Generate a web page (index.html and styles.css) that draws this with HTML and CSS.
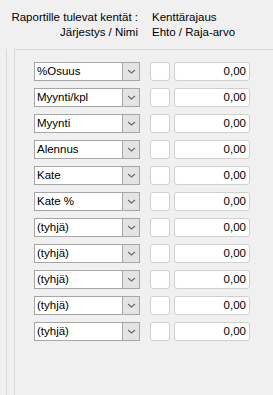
FILE: index.html
```html
<!DOCTYPE html>
<html>
<head>
<meta charset="utf-8">
<link rel="stylesheet" href="styles.css">
</head>
<body>
<div class="header">
  <div class="hleft">
    <div>Raportille tulevat kentät :</div>
    <div>Järjestys / Nimi</div>
  </div>
  <div class="hright">
    <div>Kenttärajaus</div>
    <div>Ehto / Raja-arvo</div>
  </div>
</div>
<div class="main">
  <div class="strip"></div>
  <div class="panel">
    <div class="row"><div class="combo"><span class="ctext">%Osuus</span><span class="btn"><svg width="9" height="5" viewBox="0 0 9 5"><path d="M1 1 L4.5 4 L8 1" fill="none" stroke="#6a6a6a" stroke-width="1.2"/></svg></span></div><div class="cond"></div><div class="val">0,00</div></div>
    <div class="row"><div class="combo"><span class="ctext">Myynti/kpl</span><span class="btn"><svg width="9" height="5" viewBox="0 0 9 5"><path d="M1 1 L4.5 4 L8 1" fill="none" stroke="#6a6a6a" stroke-width="1.2"/></svg></span></div><div class="cond"></div><div class="val">0,00</div></div>
    <div class="row"><div class="combo"><span class="ctext">Myynti</span><span class="btn"><svg width="9" height="5" viewBox="0 0 9 5"><path d="M1 1 L4.5 4 L8 1" fill="none" stroke="#6a6a6a" stroke-width="1.2"/></svg></span></div><div class="cond"></div><div class="val">0,00</div></div>
    <div class="row"><div class="combo"><span class="ctext">Alennus</span><span class="btn"><svg width="9" height="5" viewBox="0 0 9 5"><path d="M1 1 L4.5 4 L8 1" fill="none" stroke="#6a6a6a" stroke-width="1.2"/></svg></span></div><div class="cond"></div><div class="val">0,00</div></div>
    <div class="row"><div class="combo"><span class="ctext">Kate</span><span class="btn"><svg width="9" height="5" viewBox="0 0 9 5"><path d="M1 1 L4.5 4 L8 1" fill="none" stroke="#6a6a6a" stroke-width="1.2"/></svg></span></div><div class="cond"></div><div class="val">0,00</div></div>
    <div class="row"><div class="combo"><span class="ctext">Kate %</span><span class="btn"><svg width="9" height="5" viewBox="0 0 9 5"><path d="M1 1 L4.5 4 L8 1" fill="none" stroke="#6a6a6a" stroke-width="1.2"/></svg></span></div><div class="cond"></div><div class="val">0,00</div></div>
    <div class="row"><div class="combo"><span class="ctext">(tyhjä)</span><span class="btn"><svg width="9" height="5" viewBox="0 0 9 5"><path d="M1 1 L4.5 4 L8 1" fill="none" stroke="#6a6a6a" stroke-width="1.2"/></svg></span></div><div class="cond"></div><div class="val">0,00</div></div>
    <div class="row"><div class="combo"><span class="ctext">(tyhjä)</span><span class="btn"><svg width="9" height="5" viewBox="0 0 9 5"><path d="M1 1 L4.5 4 L8 1" fill="none" stroke="#6a6a6a" stroke-width="1.2"/></svg></span></div><div class="cond"></div><div class="val">0,00</div></div>
    <div class="row"><div class="combo"><span class="ctext">(tyhjä)</span><span class="btn"><svg width="9" height="5" viewBox="0 0 9 5"><path d="M1 1 L4.5 4 L8 1" fill="none" stroke="#6a6a6a" stroke-width="1.2"/></svg></span></div><div class="cond"></div><div class="val">0,00</div></div>
    <div class="row"><div class="combo"><span class="ctext">(tyhjä)</span><span class="btn"><svg width="9" height="5" viewBox="0 0 9 5"><path d="M1 1 L4.5 4 L8 1" fill="none" stroke="#6a6a6a" stroke-width="1.2"/></svg></span></div><div class="cond"></div><div class="val">0,00</div></div>
    <div class="row"><div class="combo"><span class="ctext">(tyhjä)</span><span class="btn"><svg width="9" height="5" viewBox="0 0 9 5"><path d="M1 1 L4.5 4 L8 1" fill="none" stroke="#6a6a6a" stroke-width="1.2"/></svg></span></div><div class="cond"></div><div class="val">0,00</div></div>
  </div>
</div>
</body>
</html>
```
FILE: styles.css
```css
html, body {
  margin: 0;
  padding: 0;
  height: 100%;
}
body {
  background: #f0f0f0;
  font-family: "Liberation Sans", Arial, sans-serif;
  font-size: 11.5px;
  color: #000;
  display: flex;
  flex-direction: column;
  overflow: hidden;
}
.header {
  height: 49px;
  display: flex;
  box-sizing: border-box;
  padding-top: 10px;
  line-height: 15px;
}
.hleft {
  width: 138px;
  text-align: right;
}
.hright {
  padding-left: 14px;
}
.main {
  flex: 1;
  display: flex;
}
.strip {
  width: 6px;
  border-right: 1px solid #d9d9d9;
}
.panel {
  margin-left: 7px;
  flex: 1;
  border-left: 1px solid #d9d9d9;
  border-top: 1px solid #d9d9d9;
  padding: 12px 0 0 19px;
  display: flex;
  flex-direction: column;
  gap: 7px;
}
.row {
  display: flex;
  height: 19px;
  align-items: stretch;
}
.combo {
  width: 106px;
  box-sizing: border-box;
  border: 1px solid #a6a6a6;
  background: #fff;
  display: flex;
}
.ctext {
  flex: 1;
  padding-left: 2px;
  line-height: 17px;
}
.btn {
  width: 16px;
  background: #e4e4e4;
  border-left: 1px solid #a6a6a6;
  display: flex;
  align-items: center;
  justify-content: center;
}
.cond {
  width: 20px;
  margin-left: 10px;
  box-sizing: border-box;
  border: 1px solid #cfcfcf;
  border-radius: 3px;
  background: #fff;
}
.val {
  width: 76px;
  margin-left: 4px;
  box-sizing: border-box;
  border: 1px solid #cfcfcf;
  border-radius: 3px;
  background: #fff;
  text-align: right;
  padding-right: 3px;
  line-height: 17px;
}
```
